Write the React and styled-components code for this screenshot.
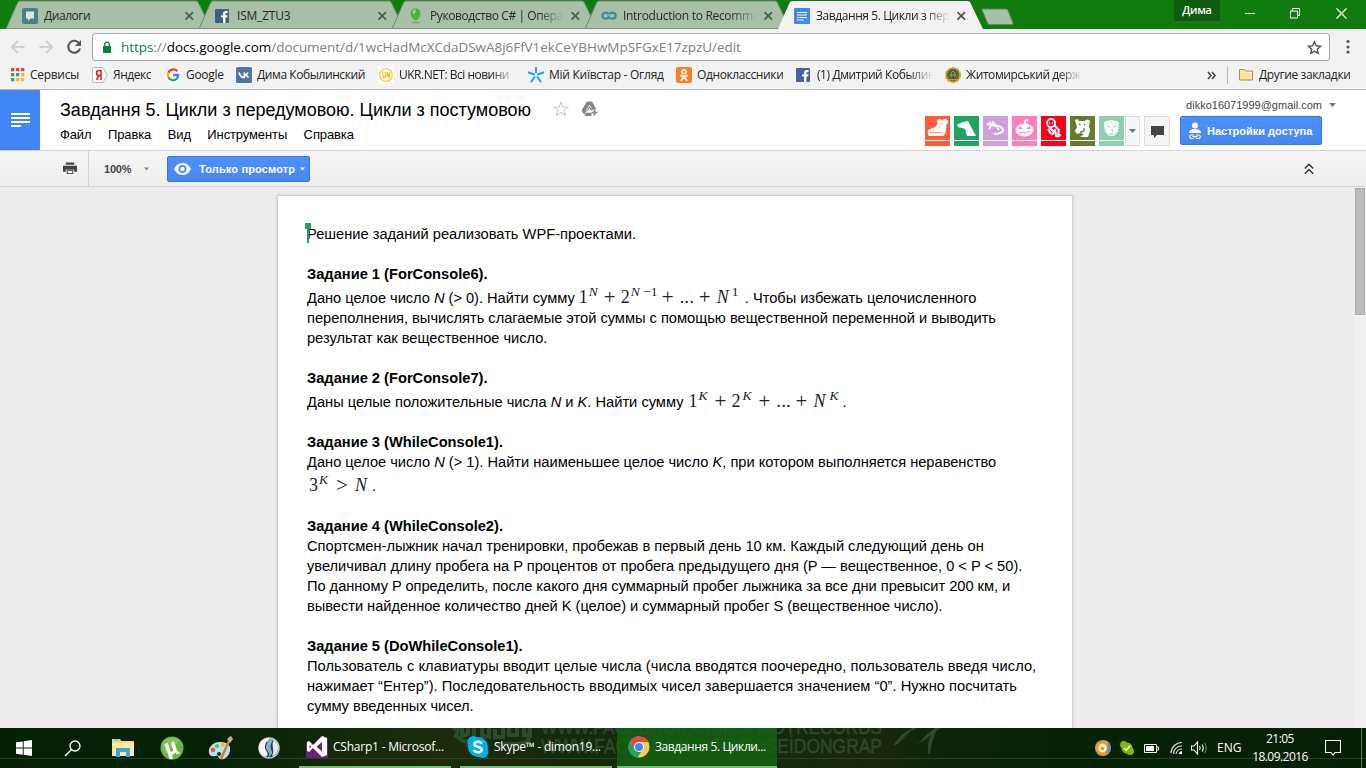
import React from "react";
import styled, { createGlobalStyle, css } from "styled-components";

const ui = `"Open Sans", "Noto Sans", sans-serif`;
const arial = `"Liberation Sans", Arial, sans-serif`;

const Global = createGlobalStyle`
  * { box-sizing: border-box; }
  body { margin: 0; overflow: hidden; background: #eee; }
`;

const Screen = styled.div`
  width: 1366px;
  height: 768px;
  display: flex;
  flex-direction: column;
  overflow: hidden;
  background: #ededed;
  font-family: ${arial};
`;

/* ---------- browser chrome ---------- */
const TabStrip = styled.div`
  height: 29px;
  flex: none;
  display: flex;
  background: #107c10;
  padding-left: 6px;
`;
const TabBox = styled.div`
  position: relative;
  width: 205px;
  height: 29px;
  flex: none;
  margin-right: -12px;
  padding: 2px 0 0 16px;
  display: flex;
  align-items: center;
  z-index: ${(p) => (p.$active ? 2 : 1)};
`;
const TabShape = styled.svg`
  position: absolute;
  left: 0;
  top: 0;
  z-index: -1;
`;
const TabTitle = styled.div`
  width: 137px;
  margin-left: 6px;
  overflow: hidden;
  white-space: nowrap;
  font: 12px/16px ${ui};
  letter-spacing: ${(p) => p.$ls || 0}px;
  color: ${(p) => (p.$active ? "#222" : "#1d2b1d")};
  ${(p) => p.$fade && css`
    width: 135px;
    margin-right: 2px;
    mask-image: linear-gradient(90deg, #000 108px, transparent 134px);
  `}
`;
const NewTab = styled.svg`
  margin: 8px 0 0 10px;
  flex: none;
`;
const WindowButtons = styled.div`
  margin-left: auto;
  display: flex;
  color: #fff;
`;
const UserBadge = styled.div`
  width: 46px;
  height: 21px;
  margin-right: 7px;
  background: #0d5c0f;
  text-align: center;
  font: 600 11px/19px ${ui};
  letter-spacing: -0.3px;
`;
const WinButton = styled.div`
  width: ${(p) => p.$w || 46}px;
  height: 27px;
  display: flex;
  align-items: center;
  justify-content: center;
`;

const NavBar = styled.div`
  height: 35px;
  flex: none;
  display: flex;
  background: #f2f2f2;
  padding-top: 4px;
`;
const NavIcons = styled.div`
  width: 92px;
  height: 28px;
  padding-left: 10px;
  display: flex;
  gap: 12px;
  align-items: center;
`;
const Omnibox = styled.div`
  width: 1238px;
  height: 28px;
  border: 1px solid #a8a8a8;
  border-radius: 3px;
  background: #fff;
  display: flex;
  align-items: center;
  padding: 0 7px 0 9px;
`;
const Url = styled.div`
  flex: 1;
  margin-left: 9px;
  font: 13.5px/24px ${ui};
  letter-spacing: ${(p) => p.$ls}px;
  color: #808080;
  white-space: nowrap;
`;
const Secure = styled.span`color: #0b8043;`;
const Host = styled.span`color: #000;`;
const Kebab = styled.svg`margin: 6px 0 0 14px;`;

const Bookmarks = styled.div`
  height: 26px;
  flex: none;
  display: flex;
  background: #f2f2f2;
  border-bottom: 1px solid #b6b6b6;
  padding: 0 0 3px 9px;
  align-items: center;
`;
const Bookmark = styled.div`
  width: ${(p) => p.$w}px;
  flex: none;
  display: flex;
  align-items: center;
  gap: 5px;
  font: 12px/18px ${ui};
  letter-spacing: ${(p) => p.$ls || 0}px;
  color: #222;
  white-space: nowrap;
`;
const BookmarkText = styled.span`
  overflow: hidden;
  ${(p) => p.$fade && css`
    width: 118px;
    mask-image: linear-gradient(90deg, #000 92px, transparent 117px);
  `}
`;
const MoreMarks = styled.div`
  width: 29px;
  margin-left: auto;
  padding-left: 9px;
`;

/* ---------- document header ---------- */
const Header = styled.header`
  height: 61px;
  flex: none;
  display: flex;
  background: #fff;
  border-bottom: 1px solid #d5d5d5;
`;
const DocsHome = styled.div`
  width: 40px;
  height: 60px;
  background: #4285f4;
  display: flex;
  align-items: center;
  justify-content: center;
`;
const TitleArea = styled.div`
  margin-left: 20px;
  flex: 1;
`;
const TitleRow = styled.div`
  height: 36px;
  padding-top: 9px;
  display: flex;
  font: 18px/22px ${arial};
  color: #000;
  white-space: nowrap;
`;
const TitleText = styled.div`
  width: 493px;
  letter-spacing: ${(p) => p.$ls}px;
`;
const TitleIcon = styled.svg`
  margin: 2px 12px 0 0;
  flex: none;
`;
const Menu = styled.nav`
  display: flex;
  gap: 16.5px;
  font: 13px/18px ${arial};
  letter-spacing: -0.12px;
`;
const Account = styled.div`
  width: 441px;
  flex: none;
`;
const Email = styled.div`
  height: 26px;
  padding: 3px 30px 0 0;
  display: flex;
  justify-content: flex-end;
  align-items: center;
  gap: 7px;
  font: 11px/16px ${arial};
  letter-spacing: 0;
  color: #444;
`;
const Viewers = styled.div`
  display: flex;
  gap: 4px;
`;
const Viewer = styled.div`
  width: 25px;
  height: 30px;
  display: flex;
  flex-direction: column;
  gap: 1px;
  & > svg { background: ${(p) => p.$c}; }
  &::after {
    content: "";
    height: 5px;
    background: ${(p) => p.$c};
  }
`;
const GreyButton = styled.div`
  width: ${(p) => p.$w}px;
  height: 30px;
  margin-left: ${(p) => p.$ml}px;
  border: 1px solid #dcdcdc;
  background: #f5f5f5;
  display: flex;
  align-items: center;
  justify-content: center;
`;
const BlueButton = styled.div`
  height: ${(p) => p.$h}px;
  width: ${(p) => p.$w}px;
  border: 1px solid #3079ed;
  border-radius: 2px;
  background: linear-gradient(#4d90fe, #4787ed);
  color: #fff;
  display: flex;
  align-items: center;
  padding-left: ${(p) => p.$pl || 7}px;
  font: bold 11px/16px ${arial};
  letter-spacing: ${(p) => p.$ls}px;
  white-space: nowrap;
`;
const ShareWrap = styled.div`margin-left: 6px;`;
const ButtonLabel = styled.span`margin: 0 5px 0 ${(p) => p.$ml}px;`;

const Toolbar = styled.div`
  height: 36px;
  flex: none;
  display: flex;
  align-items: center;
  background: linear-gradient(#f5f5f5, #eeeeee);
  border-bottom: 1px solid #d5d5d5;
`;
const PrintCell = styled.div`
  width: 89px;
  height: 35px;
  padding: 10px 0 0 63px;
  border-right: 1px solid #d2d2d2;
`;
const ZoomCell = styled.div`
  width: 78px;
  padding-left: 15px;
  display: flex;
  align-items: center;
  gap: 13px;
  font: bold 11px/16px ${arial};
  letter-spacing: -0.2px;
  color: #444;
`;
const Collapse = styled.svg`margin: 0 52px 0 auto;`;

/* ---------- page ---------- */
const Canvas = styled.main`
  flex: 1;
  min-height: 0;
  display: flex;
  justify-content: space-between;
  background: #ededed;
  padding-left: 277px;
  overflow: hidden;
`;
const Sheet = styled.article`
  width: 796px;
  height: 560px;
  margin-top: 8px;
  border: 1px solid #d0d0d0;
  box-shadow: 0 0 3px #ccc;
  background: #fff;
  padding: 28px 0 0 29px;
  font: 14.667px/20px ${arial};
  color: #000;
`;
const Line = styled.div`
  height: ${(p) => (p.$tall ? 24 : 20)}px;
  padding-top: ${(p) => (p.$tall ? 4 : 0)}px;
  font-weight: ${(p) => (p.$bold ? 700 : 400)};
  letter-spacing: ${(p) => p.$ls || 0}px;
  white-space: pre;
`;
const Caret = styled.span`
  position: absolute;
  width: 2px;
  height: 18px;
  margin-top: 1px;
  background: #23a05b;
  &::before {
    content: "";
    position: absolute;
    left: -2px;
    top: -2px;
    width: 6px;
    height: 6px;
    background: #23a05b;
  }
`;
const Formula = styled.span`
  display: inline-block;
  line-height: 0;
  margin-left: ${(p) => p.$ml || 0}px;
  font-family: "Liberation Serif", serif;
  letter-spacing: 0;
  color: #222;
`;
const Term = styled.span`
  display: inline-block;
  width: ${(p) => p.$w}px;
  font-size: 18px;
  font-style: ${(p) => (p.$i ? "italic" : "normal")};
`;
const Plus = styled(Term)`
  font-size: 21px;
  vertical-align: -1px;
`;
const Power = styled(Term)`
  font-size: 13.5px;
  vertical-align: 7px;
`;
const Dots = styled(Term)`letter-spacing: 0.3px;`;
const ScrollTrack = styled.div`
  width: 11px;
  background: #f1f1f1;
  padding: 1px 1px 0 0;
`;
const ScrollThumb = styled.div`
  height: 127px;
  background: #bcbcbc;
  border: 1px solid #a9a9a9;
`;

/* ---------- taskbar ---------- */
const Taskbar = styled.footer`
  position: relative;
  height: 40px;
  flex: none;
  display: flex;
  overflow: hidden;
  color: #fff;
  background: linear-gradient(90deg, #042004 0, #062206 220px, #142908 330px, #1c2c0a 450px, #152909 560px, #18280a 780px, #1c2608 880px, #0c2408 950px, #052205 1050px, #042004 100%);
`;
const Watermark = styled.svg`
  position: absolute;
  left: 0;
  top: 0;
  z-index: 0;
`;
const Launchers = styled.div`
  width: 299px;
  display: flex;
  z-index: 1;
`;
const Launcher = styled.div`
  width: ${(p) => p.$w || 49}px;
  height: 40px;
  display: flex;
  align-items: center;
  justify-content: center;
`;
const Task = styled.div`
  z-index: 1;
  width: ${(p) => p.$w}px;
  height: 40px;
  margin-right: ${(p) => p.$mr}px;
  padding-left: ${(p) => p.$pl}px;
  display: flex;
  align-items: center;
  gap: 5px;
  border-bottom: 2px solid #78b878;
  background: ${(p) => (p.$active ? "rgba(18,100,18,.82)" : "transparent")};
  font: 12px/18px ${ui};
  letter-spacing: ${(p) => p.$ls || 0}px;
  white-space: nowrap;
`;
const Tray = styled.div`
  z-index: 1;
  margin-left: auto;
  display: flex;
  align-items: center;
  width: 271px;
  font: 12px/18px ${ui};
`;
const TrayCell = styled.div`
  width: ${(p) => p.$w}px;
  display: flex;
  align-items: center;
`;
const Clock = styled.div`
  width: 62px;
  margin: 0 14px 0 8px;
  text-align: center;
  letter-spacing: -0.55px;
  white-space: nowrap;
`;
const ShowDesktop = styled.div`
  height: 40px;
  width: 5px;
  margin-left: auto;
  border-left: 1px solid #5d775d;
`;

/* ---------- drawings ---------- */
const I = ({ w = 16, h, vb, children }) => (
  <svg width={w} height={h || w} viewBox={vb || `0 0 ${w} ${h || w}`} fill="none">
    {children}
  </svg>
);
const Caret5 = ({ c = "#777", w = 7 }) => (
  <I w={w} h={4} vb="0 0 7 4"><path d="M0 0h7L3.5 4z" fill={c} /></I>
);
const Fb = ({ c = "#4460a0", w = 14 }) => (
  <I w={16}>
    <rect x="0" y="1" width={w} height="14" rx="1" fill={c} />
    <path d="M8 15V9.6H6.2V7.2H8V5.8C8 3.9 9 3 11 3h1.600v2.300h-1.200c-.8 0-1 .3-1 1v.9h2.100l-.3 2.400h-1.800V15z" fill="#fff" />
  </I>
);
const DocFile = () => (
  <I w={16}>
    <rect width="16" height="16" rx="1" fill="#4285f4" />
    <path d="M3 4.500h10M3 7h10M3 9.500h10M3 12h7" stroke="#fff" strokeWidth="1.200" />
  </I>
);

const tabs = [
  { title: "Диалоги", ls: -0.45, icon: <I><rect y="0" width="16" height="16" rx="2" fill="#4b7e87" /><path d="M4 3.500h8v7H8.500L6 13v-2.500H4z" fill="#dbe8dc" /></I> },
  { title: "ISM_ZTU3", ls: -0.2, icon: <Fb c="#3a6086" /> },
  { title: "Руководство C# | Опера", ls: -0.42, fade: true, icon: <I><ellipse cx="7.500" cy="14.500" rx="4" ry="1" fill="#8ba38b" /><path d="M7.500.500c3 0 5 2 5 5s-2.500 6-4.500 7H7C5 11.500 2.500 8.500 2.500 5.500s2-5 5-5z" fill="#4bb23a" /><path d="M5 6c-.5-2.500.5-4 2-4.500 1 0 1 4-2 4.500z" fill="#a5e69a" /></I> },
  { title: "Introduction to Recomme", ls: -0.3, fade: true, icon: <I><ellipse cx="4.700" cy="7.700" rx="3.400" ry="3" stroke="#3d87a3" strokeWidth="2.200" /><ellipse cx="11.300" cy="7.700" rx="3.400" ry="3" stroke="#3d87a3" strokeWidth="2.200" /><path d="M7.500 6l2 3.500" stroke="#a8c0a8" strokeWidth="1.200" /></I> },
  { title: "Завдання 5. Цикли з пер", ls: -0.42, fade: true, active: true, icon: <DocFile /> },
];

const Tab = ({ t }) => (
  <TabBox $active={t.active}>
    <TabShape width="207" height="29">
      <path d="M0 29L11.500 3Q12.500 1 14 1H190Q191.500 1 192.500 3L205 29z" fill={t.active ? "#f2f2f2" : "#a8c0a8"} stroke={t.active ? "none" : "#718b71"} />
      {!t.active && <path d="M0 28.500h205" stroke="#7d8f7d" />}
    </TabShape>
    {t.icon}
    <TabTitle $fade={t.fade} $active={t.active} $ls={t.ls}>{t.title}</TabTitle>
    <I w={18} h={10}><path d="M4.500 1.200l7.500 7.500M12 1.200L4.500 8.700" stroke={t.active ? "#555" : "#4c5f4c"} strokeWidth="1.700" /></I>
  </TabBox>
);

const marks = [
  { w: 83, ls: -0.3, text: "Сервисы", icon: <I>{[0, 1, 2].map((r) => [0, 1, 2].map((c) => <rect key={`${r}${c}`} x={2 + c * 5} y={1 + r * 5} width="3.300" height="3.300" fill={[["#ea4335", "#ea4335", "#ea4335"], ["#34a853", "#4285f4", "#fbbc05"], ["#34a853", "#fbbc05", "#fbbc05"]][r][c]} />))}</I> },
  { w: 73, ls: -0.45, text: "Яндекс", icon: <I><path d="M.5 2Q.5.500 2 .5h9L15 8l-4 7.500H2Q.5 15.500.5 14z" fill="#fff" stroke="#bbb" /><path d="M9 13V3.500H7.500C3.500 3.500 3.500 8.500 7.500 8.500H9M7 8.500L4.500 13" stroke="#e02020" strokeWidth="1.600" /></I> },
  { w: 71, ls: -0.3, text: "Google", icon: <I><circle cx="8" cy="8" r="8" fill="#fff" /><path d="M12.300 4.300A5.200 5.200 0 0 0 3.400 5.800" stroke="#ea4335" strokeWidth="2.400" /><path d="M3.400 5.800a5 5 0 0 0 0 4.500" stroke="#fbbc05" strokeWidth="2.400" /><path d="M3.400 10.300a5.200 5.200 0 0 0 8.300 1.500" stroke="#34a853" strokeWidth="2.400" /><path d="M8 8h5.200a5.200 5.200 0 0 1-1.500 3.800" stroke="#4285f4" strokeWidth="2.400" /></I> },
  { w: 142, ls: -0.42, text: "Дима Кобылинский", icon: <I><rect width="16" height="16" rx="1.500" fill="#4d76a1" /><path d="M3 5.500c1 3 2.500 5 4.500 5h.8v-5M8.300 8c2 0 3-1 3.700-2.500M8.300 8c2.200 0 3.200 1 4.200 2.500" stroke="#fff" strokeWidth="1.700" /></I> },
  { w: 150, ls: -0.5, text: "UKR.NET: Всі новини", fade: true, icon: <I><rect width="16" height="16" rx="1" fill="#fff" /><circle cx="8" cy="8" r="6.300" stroke="#f3cf35" strokeWidth="1.300" /><path d="M4.800 5v4q0 2 1.200 2t1.200-2V5M9 11V5l2.500 6V5" stroke="#e8c22b" strokeWidth="1.200" /></I> },
  { w: 148, ls: -0.26, text: "Мій Київстар - Огляд", icon: <I><path d="M8 5.500V.5M10 7.500l5.500-2M6 7.500L.5 5.500M9.500 10l3 4.500M6.500 10l-3 4.500" stroke="#1da1f2" strokeWidth="2" strokeLinecap="round" /></I> },
  { w: 120, ls: -0.38, text: "Одноклассники", icon: <I><rect width="16" height="16" rx="2" fill="#f58220" /><circle cx="8" cy="4.800" r="2" stroke="#fff" strokeWidth="1.500" /><path d="M5 8.500c2 1.500 4 1.500 6 0M8 9.500l-2.700 3.700M8 9.500l2.700 3.700" stroke="#fff" strokeWidth="1.700" strokeLinecap="round" /></I> },
  { w: 149, ls: -0.42, text: "(1) Дмитрий Кобылин", fade: true, icon: <Fb c="#4460a0" /> },
  { w: 140, ls: -0.42, text: "Житомирський держ", fade: true, icon: <I><circle cx="8" cy="8" r="7" fill="#6b6a20" stroke="#d6a51e" strokeWidth="2" strokeDasharray="3.500 1" /><circle cx="8" cy="7" r="4.500" fill="#35615a" /><path d="M6 10V6l2-2 2 2v4M5 8h6M4 12.500h8" stroke="#b99c35" strokeWidth="1" /></I> },
];

const viewers = [
  ["#ff5a3c", <><path d="M3 14l7-3 4-5 1.500 2 3-1 3 3-1 7-2 3H4q-2-2-1-6z" fill="#fff" /><circle cx="14.500" cy="5.500" r="2.500" fill="#fff" /><circle cx="20" cy="6" r="3" fill="#fff" /><path d="M5 16.500h12M14 10.500l1 1" stroke="#ff5a3c" strokeDasharray="1.500 1" /></>],
  ["#1fa463", <><path d="M3 8.500L9 6l5-1 1 2 7 13H13l-2-7-3-1-4-1z" fill="#fff" /></>],
  ["#cf9fdc", <><path d="M4 8l5 1 4 1q3-1 6 2t-2 5-6 0" stroke="#fff" strokeWidth="2" /><path d="M6 6l3 2 1-2 3 3M8 10l-2 3M14 11l2 3" stroke="#fff" strokeWidth="1.500" /></>],
  ["#ff7fb9", <><ellipse cx="12.500" cy="14" rx="9" ry="6.500" fill="#fff" /><path d="M13 8V5l3-1" stroke="#fff" strokeWidth="2" /><path d="M8 10.500l2 2H7zM17 10.500l-2 2h3zM7 15.500l2 1.500 2-1 2 1 2-1 3-.5" stroke="#ff7fb9" /></>],
  ["#fb0018", <><circle cx="10" cy="7" r="4" stroke="#fff" strokeWidth="1.800" /><path d="M8 7h1M11 7h1M13 9l5 5-1 5M8 11l5 5-2 3M7 13l3 5M14 13l1 7q4 1 4-2" stroke="#fff" strokeWidth="2" /></>],
  ["#647c2d", <><path d="M5 4q3-2 4 1h6q2-3 5 0l-1 5 1 5-2 6h-8l4-3-4-1-3 1-2-3 2-4z" fill="#fff" /><path d="M9 8.500h1.500M14 8.500h1.500M14 12q1 4-4 4" stroke="#647c2d" strokeWidth="1.300" /></>],
  ["#8fd0ae", <><path d="M5 6l3-1 4-1 5 1 3 1-1 9-4 5h-5l-4-5z" fill="#fff" /><path d="M8 10l3 1M17 10l-3 1M12 14h2l-1 2M10 18h5M9 7h1M12 6.500h1M15 7h1" stroke="#8fd0ae" /></>],
];

export default function App() {
  return (
    <Screen>
      <Global />
      <TabStrip>
        {tabs.map((t) => <Tab key={t.title} t={t} />)}
        <NewTab width="34" height="18">
          <path d="M1 1h24q1.500 0 2 1.500l5 12.500q.5 1.500-1 1.500H8.500Q7 16.500 6.500 15L1 2z" fill="#a8c0a8" stroke="#5f865f" />
        </NewTab>
        <WindowButtons>
          <UserBadge>Дима</UserBadge>
          <WinButton><I w={10} h={10}><path d="M0 4.500h10" stroke="#fff" /></I></WinButton>
          <WinButton $w={44}><I w={10} h={11}><path d="M.5 3h7v7h-7zM2.500 3V.5h7v7H7.500" stroke="#fff" /></I></WinButton>
          <WinButton $w={49}><I w={11}><path d="M.5.500l10 10M10.500.500l-10 10" stroke="#fff" strokeWidth="1.200" /></I></WinButton>
        </WindowButtons>
      </TabStrip>
      <NavBar>
        <NavIcons>
          <I><path d="M14.500 8H2M8 2L2 8l6 6" stroke="#cfcfcf" strokeWidth="2" /></I>
          <I><path d="M1.500 8H14M8 2l6 6-6 6" stroke="#cfcfcf" strokeWidth="2" /></I>
          <I><path d="M13.300 4.500A6 6 0 1 0 14 9.500" stroke="#555" strokeWidth="2.100" /><path d="M15 1v6H9z" fill="#555" /></I>
        </NavIcons>
        <Omnibox>
          <I w={10} h={13}><rect x="1" y="5" width="8" height="7" fill="#0b8043" /><path d="M2.700 5V3.500a2.300 2.300 0 0 1 4.600 0V5" stroke="#0b8043" strokeWidth="1.300" /></I>
          <Url $ls={-0.05}><Secure>https</Secure>://<Host>docs.google.com</Host>/document/d/1wcHadMcXCdaDSwA8j6FfV1ekCeYBHwMpSFGxE17zpzU/edit</Url>
          <I w={15}><path d="M7.500 1.800l1.800 4 4.300.4-3.300 2.900 1 4.200-3.800-2.200-3.800 2.200 1-4.200L1.400 6.200l4.300-.4z" stroke="#555" strokeWidth="1.400" /></I>
        </Omnibox>
        <Kebab width="8" height="16"><circle cx="4" cy="2.500" r="1.600" fill="#555" /><circle cx="4" cy="8" r="1.600" fill="#555" /><circle cx="4" cy="13" r="1.600" fill="#555" /></Kebab>
      </NavBar>
      <Bookmarks>
        {marks.map((m) => (
          <Bookmark key={m.text} $w={m.w} $ls={m.ls}>
            {m.icon}
            <BookmarkText $fade={m.fade}>{m.text}</BookmarkText>
          </Bookmark>
        ))}
        <MoreMarks><I w={10} h={9}><path d="M1 1l3 3.500L1 8M5 1l3 3.500L5 8" stroke="#444" strokeWidth="1.600" /></I></MoreMarks>
        <I w={11} h={18}><path d="M.5 0v18" stroke="#bbb" /></I>
        <Bookmark $w={128} $ls={-0.38}>
          <I><path d="M1.500 4V2.500h5L8 4h6.500v9h-13z" fill="#ffe0a0" stroke="#b08a4e" /><path d="M2 5.500h12" stroke="#fff0c8" /></I>
          <BookmarkText>Другие закладки</BookmarkText>
        </Bookmark>
      </Bookmarks>
      <Header>
        <DocsHome><I w={20} h={15}><path d="M1 1h19M1 5h19M1 9h19M1 13h10" stroke="#fff" strokeWidth="2" /></I></DocsHome>
        <TitleArea>
          <TitleRow>
            <TitleText $ls={0}>Завдання 5. Цикли з передумовою. Цикли з постумовою</TitleText>
            <TitleIcon width="16" height="16" fill="none"><path d="M8 .8l1.800 5.200h5.500l-4.400 3.200 1.700 5.300L8 11.300l-4.600 3.200 1.700-5.300L.7 6h5.500z" stroke="#c4c4c4" /></TitleIcon>
            <TitleIcon width="18" height="16"><path d="M6 .5h5l4.500 7.700h-2.300L10 9.500 8.500 7 5.500 11.800h5V15H4L.5 9.500z" fill="#858585" /><path d="M8.500 4.200L5.200 9.500M8.500 4.200l2 3.300M3.500 14l2.200-3.700h4.500" stroke="#fff" strokeWidth=".8" fill="none" /><path d="M13.500 8.500v6M10.500 11.500h6" stroke="#858585" strokeWidth="1.700" /></TitleIcon>
          </TitleRow>
          <Menu><span>Файл</span><span>Правка</span><span>Вид</span><span>Инструменты</span><span>Справка</span></Menu>
        </TitleArea>
        <Account>
          <Email>dikko16071999@gmail.com<Caret5 /></Email>
          <Viewers>
            {viewers.map(([c, art]) => <Viewer key={c} $c={c}><I w={25} h={24}>{art}</I></Viewer>)}
            <GreyButton $w={15} $ml={-3}><Caret5 /></GreyButton>
            <GreyButton $w={26} $ml={0}><I w={13} h={13}><path d="M0 1h13v9H6l-3 3v-3H0z" fill="#444" /></I></GreyButton>
            <ShareWrap>
              <BlueButton $w={142} $h={29} $ls={0}>
                <I w={15} h={18}><circle cx="7" cy="3.500" r="3" fill="#fff" /><path d="M1 11q0-4 6-4t6 4z" fill="#fff" /><path d="M6 13H3.500a1.700 1.700 0 0 0 0 3.500H6M8 13h2.500a1.700 1.700 0 0 1 0 3.500H8M4.500 14.700h5" stroke="#fff" strokeWidth="1.200" /></I>
                <ButtonLabel $ml={4}>Настройки доступа</ButtonLabel>
              </BlueButton>
            </ShareWrap>
          </Viewers>
        </Account>
      </Header>
      <Toolbar>
        <PrintCell><I w={14} h={14} vb="0 0 15 14"><path d="M3 1h9v2.500H3zM0 4.500h15V11h-3V8.500H3V11H0zM4 9h7v4.500H4z" fill="#444" /><path d="M5 10h5v2.500H5z" fill="#eee" /></I></PrintCell>
        <ZoomCell>100%<Caret5 c="#888" w={5} /></ZoomCell>
        <BlueButton $w={143} $h={26} $ls={0.15} $pl={6}>
          <I w={17} h={14}><path d="M0 7Q3 1 8.500 1T17 7q-3 6-8.500 6T0 7z" fill="#fff" /><circle cx="8.500" cy="7" r="4" fill="#4a8bf5" /><circle cx="8.500" cy="7" r="2.200" fill="#fff" /></I>
          <ButtonLabel $ml={8}>Только просмотр</ButtonLabel>
          <Caret5 c="#fff" w={5} />
        </BlueButton>
        <Collapse width="10" height="12" fill="none"><path d="M.8 5.500L5 1.300l4.200 4.200M.8 10.700L5 6.500l4.200 4.200" stroke="#333" strokeWidth="1.500" /></Collapse>
      </Toolbar>
      <Canvas>
        <Sheet>
          <Line><Caret />Решение заданий реализовать WPF-проектами.</Line>
          <Line />
          <Line $bold>Задание 1 (ForConsole6).</Line>
          <Line $tall $ls={-0.03}>Дано целое число <i>N</i> (&gt; 0). Найти сумму <Formula><Term $w={10}>1</Term><Power $i $w={15}>N</Power><Plus $w={17}>+</Plus><Term $w={10}>2</Term><Power $w={31}><i>N</i> −1</Power><Plus $w={18}>+</Plus><Dots $w={19}>...</Dots><Plus $w={18}>+</Plus><Term $i $w={15}>N</Term><Power $w={9}>1</Power></Formula> . Чтобы избежать целочисленного</Line>
          <Line $ls={-0.015}>переполнения, вычислять слагаемые этой суммы с помощью вещественной переменной и выводить</Line>
          <Line $ls={-0.03}>результат как вещественное число.</Line>
          <Line />
          <Line $bold>Задание 2 (ForConsole7).</Line>
          <Line $tall>Даны целые положительные числа <i>N</i> и <i>K</i>. Найти сумму <Formula $ml={1}><Term $w={10}>1</Term><Power $i $w={16}>K</Power><Plus $w={17}>+</Plus><Term $w={11}>2</Term><Power $i $w={16}>K</Power><Plus $w={18}>+</Plus><Dots $w={19}>...</Dots><Plus $w={18}>+</Plus><Term $i $w={16}>N</Term><Power $i $w={13}>K</Power></Formula>.</Line>
          <Line />
          <Line $bold>Задание 3 (WhileConsole1).</Line>
          <Line $ls={-0.015}>Дано целое число <i>N</i> (&gt; 1). Найти наименьшее целое число <i>K</i>, при котором выполняется неравенство</Line>
          <Line $tall><Formula $ml={2}><Term $w={10}>3</Term><Power $i $w={17}>K</Power><Plus $w={19}>&gt;</Plus><Term $i $w={17}>N</Term></Formula>.</Line>
          <Line />
          <Line $bold>Задание 4 (WhileConsole2).</Line>
          <Line $ls={-0.012}>Спортсмен-лыжник начал тренировки, пробежав в первый день 10 км. Каждый следующий день он</Line>
          <Line $ls={-0.012}>увеличивал длину пробега на P процентов от пробега предыдущего дня (P — вещественное, 0 &lt; P &lt; 50).</Line>
          <Line $ls={-0.045}>По данному P определить, после какого дня суммарный пробег лыжника за все дни превысит 200 км, и</Line>
          <Line $ls={-0.035}>вывести найденное количество дней K (целое) и суммарный пробег S (вещественное число).</Line>
          <Line />
          <Line $bold>Задание 5 (DoWhileConsole1).</Line>
          <Line $ls={0.055}>Пользователь с клавиатуры вводит целые числа (числа вводятся поочередно, пользователь введя число,</Line>
          <Line $ls={0.02}>нажимает “Ентер”). Последовательность вводимых чисел завершается значением “0”. Нужно посчитать</Line>
          <Line $ls={-0.05}>сумму введенных чисел.</Line>
        </Sheet>
        <ScrollTrack><ScrollThumb /></ScrollTrack>
      </Canvas>
      <Taskbar>
        <Watermark width="1366" height="40">
          <path d="M0 30.500h1366" stroke="#27492a" opacity=".8" />
          <g fill="#2c4a2c" fontFamily="Liberation Sans" fontWeight="400" fontSize="19.500" stroke="#2c4a2c" strokeWidth=".5">
            <text x="541" y="6" textLength="341" lengthAdjust="spacingAndGlyphs">WWW.FACEBOOK.COM/SHADYRECORDS</text>
            <text x="541" y="24.500" textLength="341" lengthAdjust="spacingAndGlyphs">WWW.FACEBOOK.COM/POSEİDONGRAP</text>
          </g>
          <path d="M453 0l5 2-2 6 7 5h8M462 0v8l6-2V0M474 0v8M482 0v8l7 1V0M495 1v8h8V0M509 0v7h8V0M524 0v7l6 1V0l-2 14-14 3M466 17h20M497 16h26" fill="none" stroke="#2c4a2c" strokeWidth="4" />
          <path d="M902 16q17 3 29-9l10-7h-6q-9 6-14 13-8 5-19 3z" fill="#2c4a2c" />
          <path d="M936 0q-9 11-7 26 2-14 8-26zM916 0q-12 3-21 16l3-1q7-8 15-15z" fill="#2c4a2c" stroke="#2c4a2c" strokeWidth="1.500" />
        </Watermark>
        <Launchers>
          <Launcher $w={48}><I w={16}><path d="M0 2.300L6.800 1.400v6.200H0zM7.700 1.200L16 0v7.600H7.700zM0 8.500h6.800v6.200L0 13.800zM7.700 8.500H16V16l-8.300-1.200z" fill="#fff" /></I></Launcher>
          <Launcher $w={48}><I w={17}><circle cx="11" cy="6" r="5" stroke="#fff" strokeWidth="1.300" /><path d="M7.500 9.500L1 16" stroke="#fff" strokeWidth="1.400" /></I></Launcher>
          <Launcher $w={54}><I w={22} h={20}><path d="M0 1h8l1.500 2H22v15H0z" fill="#fbd97c" /><path d="M0 5h22v13H0z" fill="#ffe9a2" /><path d="M4 19v-8q0-1 1-1h12q1 0 1 1v8h-4v-5H8v5z" fill="#3aa7e0" /><path d="M2 2h5" stroke="#57b9e8" strokeWidth="1.200" /></I></Launcher>
          <Launcher $w={44}><I w={24}><circle cx="12" cy="12" r="11.500" fill="#6cb446" /><path d="M4 4q8-5 16 0L5 18Q0 10 4 4z" fill="#93cc70" opacity=".6" /><path d="M4.500 8l3.200-1 2.600 8q1.200 2 2.700-.5L11 6.500l3.200-1 2.800 9q.8 1.800 2.500 1l.3 1.800q-3 1.500-4.500-.8-1.200 2.300-3.500 1.800l1.200 4.500-3.300.5z" fill="#fff" /></I></Launcher>
          <Launcher $w={52}><I w={25}><path d="M12 6C4 6 0 12 1 17q1 4 6 3 3-1 4 2 1 2 5 1 7-4 6-12-2-5-10-5z" fill="#b9dff2" /><circle cx="5" cy="14" r="2.300" fill="#e05a4a" /><circle cx="9" cy="10" r="2.100" fill="#69b84b" /><circle cx="15" cy="9" r="2" fill="#f0ba35" /><circle cx="11" cy="18" r="2" fill="#183618" /><path d="M21 5l-8 18" stroke="#d77a2b" strokeWidth="2.400" /><path d="M19 3q3-3 4-3l2 3-3 4z" fill="#d6aa80" /></I></Launcher>
          <Launcher $w={46}><I w={22}><circle cx="11" cy="11" r="10" fill="#32434c" stroke="#c5d0d4" strokeWidth="1.500" /><path d="M3 4q6-4 9-2-5 3-3 8t1 10Q1 19 1 11q0-4 2-7z" fill="#f2f5f6" /><path d="M12 2q4 0 5 2-5 4-3 8 2 5-2 8l-4-1q3-3 1-7-3-6 3-10z" fill="#7fb3cd" /><path d="M9 5q-3 5 0 9t0 6M15 4q-3 5-1 9t-2 7" stroke="#26363f" strokeWidth="1.200" /><path d="M16 3q5 4 4 9-1 6-6 7 2-4 1-8-1-5 1-8z" fill="#e6ecef" /></I></Launcher>
        </Launchers>
        <Task $w={152} $mr={9} $pl={7} $ls={-0.22}>
          <I w={22}><path d="M0 6l3-1 4 4 9-9 6 2v20H0z" fill="#68217a" /><path d="M1 6l2-1 4 4L16 0l5 2v17l-5 2-9-9-4 4-2-1zM3.500 9v3.500L5.300 10.700zM16 6v9.500l-5.500-4.800z" fill="#fff" fillRule="evenodd" /></I>
          CSharp1 - Microsof...
        </Task>
        <Task $w={152} $mr={5} $pl={7} $ls={-0.25}>
          <I w={22}><circle cx="11" cy="11" r="10" fill="#00aff0" /><circle cx="6.500" cy="6" r="6" fill="#00aff0" /><circle cx="15.500" cy="16" r="6" fill="#00aff0" /><path d="M15 7.500Q13.500 5.500 10.500 5.700 7.300 6 7.300 8.300q0 2 3.700 2.600t3.700 2.900q0 2.500-3.500 2.500T6.700 14" stroke="#fff" strokeWidth="2.500" /></I>
          Skype™ - dimon19...
        </Task>
        <Task $w={160} $mr={0} $pl={11} $ls={-0.4} $active>
          <I w={22}><circle cx="11" cy="11" r="10.500" fill="#fc4" /><path d="M2 5.500A10.500 10.500 0 0 1 20.500 6H11l-4 8z" fill="#dd4b3e" /><path d="M2 5.500l5 8.500 6 2-3.500 5.500A10.500 10.500 0 0 1 2 5.500z" fill="#1da462" /><circle cx="11" cy="11" r="5" fill="#fff" /><circle cx="11" cy="11" r="4" fill="#4285f4" /></I>
          Завдання 5. Цикли...
        </Task>
        <Tray>
          <TrayCell $w={25}><I><circle cx="8" cy="8" r="8" fill="#f39a1e" /><path d="M13.500 2q4 6-1 12.500L11 13q3-5 1-10z" fill="#35a6c4" /><circle cx="7.500" cy="8" r="4.200" fill="#fff" /><circle cx="7.500" cy="8.500" r="2" fill="#f39a1e" /></I></TrayCell>
          <TrayCell $w={24}><I w={14}><circle cx="7" cy="7" r="5.500" fill="#7fba00" /><circle cx="3.800" cy="3.800" r="3.800" fill="#7fba00" /><circle cx="10.200" cy="10.200" r="3.800" fill="#7fba00" /><path d="M4 7l2.200 2.200L10 5" stroke="#fff" strokeWidth="1.500" /></I></TrayCell>
          <TrayCell $w={26}><I w={15} h={9}><path d="M.5.500h12v8H.5zM13 3h1.500v3H13" stroke="#fff" /><path d="M2 2h8v5H2z" fill="#fff" /></I></TrayCell>
          <TrayCell $w={21}><I w={14}><path d="M1 12A11 11 0 0 1 12 1.500M3.500 13A8 8 0 0 1 12 5M6 13a6 6 0 0 1 6-5" stroke="#d6ded6" strokeWidth="1.200" /><path d="M9 13q0-2.500 3-3v3z" fill="#fff" /></I></TrayCell>
          <TrayCell $w={26}><I w={17} h={14}><path d="M.5 5h2.500l3.500-4v12L3 9H.5z" stroke="#fff" strokeWidth="1.100" /><path d="M8.500 5q1.500 2 0 4M11 3.500q2.500 3.500 0 7" stroke="#fff" strokeWidth="1.100" /><path d="M13.500 2q3.500 5 0 10" stroke="#789078" /></I></TrayCell>
          <TrayCell $w={24}>ENG</TrayCell>
          <Clock>21:05<br />18.09.2016</Clock>
          <TrayCell $w={17}><I w={16}><path d="M.5.500h15v12H10L8 15l-2-2.500H.5z" stroke="#fff" strokeWidth="1.100" /></I></TrayCell>
          <ShowDesktop />
        </Tray>
      </Taskbar>
    </Screen>
  );
}
